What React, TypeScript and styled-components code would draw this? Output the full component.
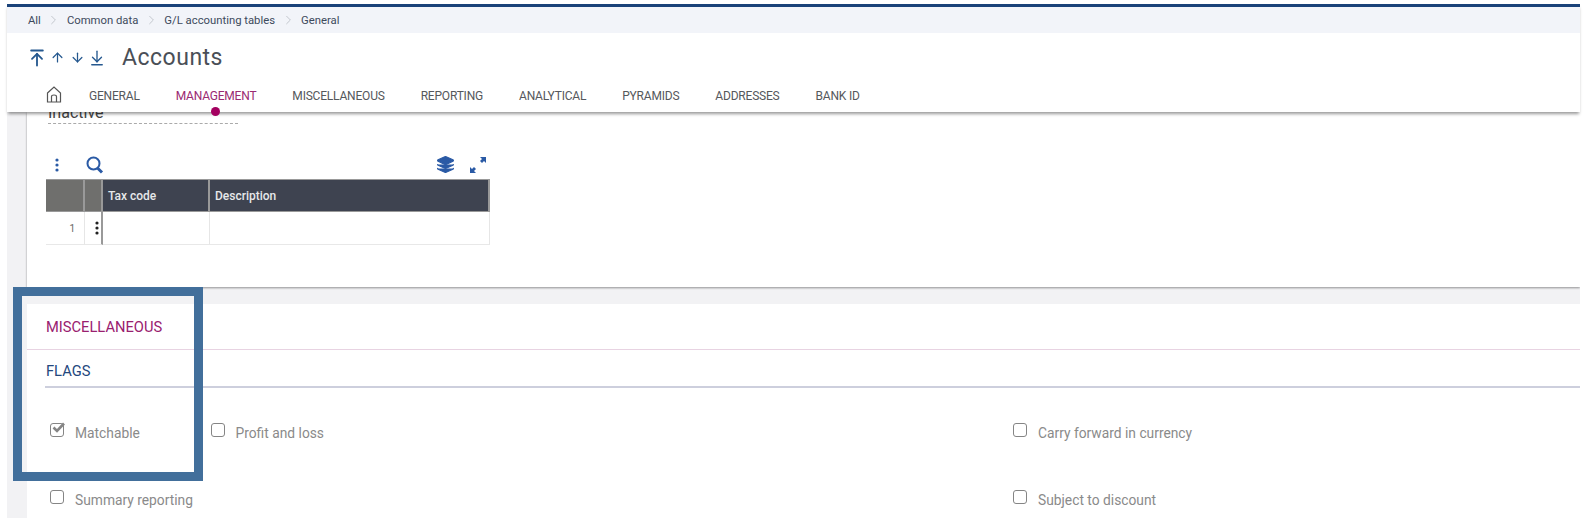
import React from "react";
import styled, { createGlobalStyle } from "styled-components";
import { ArrowUpToLine, ArrowUp, ArrowDown, ArrowDownToLine, ChevronRight, Layers } from "lucide-react";

const Global = createGlobalStyle`
  html, body { margin: 0; padding: 0; background: #fff; }
  body { font-family: Roboto, "Liberation Sans", sans-serif; }
  #root { width: 1591px; height: 524px; overflow: hidden; }
`;

const Page = styled.div`
  position: relative;
  width: 1591px;
  height: 524px;
  padding: 4px 11px 6px 7px;
  box-sizing: border-box;
  display: flex;
  flex-direction: column;
  overflow: hidden;
`;

const Header = styled.header`
  position: relative;
  z-index: 2;
  flex: none;
  background: #fff;
  border-top: 3px solid #1a4279;
  box-shadow: 0 3px 3px -1px rgba(0, 0, 0, 0.4);
`;

const Breadcrumb = styled.nav`
  height: 26px;
  background: #f2f4f9;
  padding-left: 21px;
  display: flex;
  align-items: center;
  gap: 5.5px;
  font-size: 11.3px;
  color: #3d4a5c;
`;

const Crumb = styled.span`
  white-space: nowrap;
`;

const Sep = styled(ChevronRight)`
  width: 15px;
  height: 16px;
  color: #bfc3ca;
  stroke-width: 1.5;
`;

const TitleRow = styled.div`
  height: 47px;
  box-sizing: border-box;
  padding: 2px 0 0 20px;
  display: flex;
  align-items: center;
`;

const ArrowGroup = styled.div`
  display: flex;
  align-items: center;
  color: #25588f;
  margin-right: 15px;
`;

const ArrowIcon = styled.span<{ $size: number; $stroke: number }>`
  display: flex;
  width: 20px;
  justify-content: center;
  svg {
    width: ${(p) => p.$size}px;
    height: ${(p) => p.$size}px;
    stroke-width: ${(p) => p.$stroke};
  }
`;

const Title = styled.h1`
  margin: 0;
  font-size: 23px;
  font-weight: 400;
  letter-spacing: 0.5px;
  color: #4a4f57;
`;

const Tabs = styled.div`
  height: 32px;
  display: flex;
  align-items: center;
  padding-left: 39px;
  padding-bottom: 1px;
  box-sizing: border-box;
`;

const HomeIcon = styled.svg`
  width: 16px;
  height: 17px;
  margin-right: 27px;
  margin-top: -3px;
  color: #555;
`;

const Tab = styled.div<{ $active?: boolean }>`
  position: relative;
  font-size: 12px;
  letter-spacing: -0.2px;
  color: ${(p) => (p.$active ? "#9a2a72" : "#55585c")};
  margin-right: 36px;
  white-space: nowrap;
`;

const Dot = styled.span`
  position: absolute;
  left: 35px;
  top: 18px;
  width: 9px;
  height: 9px;
  border-radius: 50%;
  background: #a3005f;
`;

const Body = styled.main`
  flex: 1;
  min-height: 0;
  display: flex;
  flex-direction: column;
  padding-left: 20px;
  background: #f2f2f4;
  overflow: hidden;
`;

const Card = styled.section`
  background: #fff;
  flex: none;
`;

const TopCard = styled(Card)`
  height: 175px;
  box-sizing: border-box;
  padding: 0 0 0 19px;
  box-shadow: 0 1px 2px rgba(0, 0, 0, 0.4);
  position: relative;
  z-index: 1;
`;

const FieldLabel = styled.div`
  margin-left: 2px;
  width: 190px;
  height: 11px;
  line-height: 1px;
  font-size: 16px;
  color: #444;
  border-bottom: 1px dashed #aaa;
  white-space: nowrap;
`;

const GridTools = styled.div`
  width: 444px;
  height: 23px;
  margin-top: 29px;
  display: flex;
  align-items: center;
  color: #2a5aa5;
`;

const ToolIcon = styled.svg<{ $left?: number; $right?: number }>`
  flex: none;
  margin-left: ${(p) => p.$left ?? 0}px;
  margin-right: ${(p) => p.$right ?? 0}px;
`;

const Spacer = styled.div`
  flex: 1;
`;

const Table = styled.div`
  margin-top: 3px;
  width: 444px;
  display: grid;
  grid-template-columns: 39px 18px 107px 1fr;
`;

const HeadCell = styled.div<{ $dark?: boolean }>`
  height: 33px;
  box-sizing: border-box;
  background: ${(p) => (p.$dark ? "#3e4350" : "#6f6f6d")};
  border: 1px solid #999;
  border-width: 1px 2px 1px 0;
  color: #e6e8ea;
  font-size: 12px;
  font-weight: 500;
  display: flex;
  align-items: center;
  padding-left: 5px;
`;

const RowCell = styled.div<{ $strong?: boolean }>`
  height: 33px;
  box-sizing: border-box;
  border-bottom: 1px solid #e8e8e8;
  border-right: ${(p) => (p.$strong ? "2px solid #999" : "1px solid #e6e6e6")};
  display: flex;
  align-items: center;
  font-size: 10px;
  color: #666;
`;

const RowNumber = styled(RowCell)`
  justify-content: flex-end;
  padding-right: 9px;
`;

const RowMenu = styled(RowCell)`
  justify-content: center;
  padding-left: 8px;
  color: #222;
`;

const Band = styled.div`
  height: 17px;
  flex: none;
`;

const LowerCard = styled(Card)`
  flex: 1;
`;

const SectionTitle = styled.div`
  height: 46px;
  box-sizing: border-box;
  padding: 15px 0 0 19px;
  font-size: 14.7px;
  line-height: 16px;
  color: #99206f;
  border-bottom: 1px solid #e8d3e2;
`;

const BlockTitle = styled.div`
  margin-left: 18px;
  height: 38px;
  box-sizing: border-box;
  padding: 13px 0 0 1px;
  font-size: 14.7px;
  line-height: 16px;
  color: #24477d;
  border-bottom: 2px solid #cdcfdd;
`;

const Flags = styled.div`
  display: grid;
  grid-template-columns: 160.5px 802.5px 1fr;
  grid-auto-rows: 67px;
  padding: 36px 0 0 23px;
`;

const Flag = styled.label`
  display: flex;
  align-items: flex-start;
  gap: 11px;
  font-size: 13.8px;
  line-height: 18px;
  color: #8a8a8a;
`;

const Box = styled.span`
  flex: none;
  width: 14px;
  height: 14px;
  box-sizing: border-box;
  border: 1.5px solid #858585;
  border-radius: 3px;
  position: relative;
  top: -1px;
`;

const CheckMark = styled.svg`
  position: absolute;
  left: 0;
  top: -3px;
  overflow: visible;
`;

const Highlight = styled.div`
  position: absolute;
  left: 13px;
  top: 287px;
  width: 190px;
  height: 194px;
  box-sizing: border-box;
  border: 9px solid #426f9b;
  z-index: 3;
  pointer-events: none;
`;

const Kebab = ({ color }: { color: string }) => (
  <svg width="4" height="14" viewBox="0 0 4 14" style={{ display: "block" }}>
    <circle cx="2" cy="2" r="1.6" fill={color} />
    <circle cx="2" cy="7" r="1.6" fill={color} />
    <circle cx="2" cy="12" r="1.6" fill={color} />
  </svg>
);

const FlagItem = ({ label, checked }: { label: string; checked?: boolean }) => (
  <Flag>
    <Box>
      {checked && (
        <CheckMark width="14" height="14" viewBox="0 0 14 14">
          <path d="M2.5 6.5 L6 10 L13 2.5" fill="none" stroke="#858585" strokeWidth="2.6" />
        </CheckMark>
      )}
    </Box>
    {label}
  </Flag>
);

export default function App() {
  return (
    <>
      <Global />
      <Page>
        <Header>
          <Breadcrumb>
            <Crumb>All</Crumb>
            <Sep />
            <Crumb>Common data</Crumb>
            <Sep />
            <Crumb>G/L accounting tables</Crumb>
            <Sep />
            <Crumb>General</Crumb>
          </Breadcrumb>
          <TitleRow>
            <ArrowGroup>
              <ArrowIcon $size={20} $stroke={2.2}><ArrowUpToLine /></ArrowIcon>
              <ArrowIcon $size={15} $stroke={2}><ArrowUp /></ArrowIcon>
              <ArrowIcon $size={15} $stroke={2}><ArrowDown /></ArrowIcon>
              <ArrowIcon $size={18} $stroke={1.8}><ArrowDownToLine /></ArrowIcon>
            </ArrowGroup>
            <Title>Accounts</Title>
          </TitleRow>
          <Tabs>
            <HomeIcon viewBox="0 0 16 17" fill="none" stroke="currentColor" strokeWidth="1.2">
              <path d="M1.5 7 L8 1 L14.5 7 V16 H1.5 Z" />
              <path d="M5.5 16 V10.5 Q5.5 9 8 9 Q10.5 9 10.5 10.5 V16" />
            </HomeIcon>
            <Tab>GENERAL</Tab>
            <Tab $active>
              MANAGEMENT
              <Dot />
            </Tab>
            <Tab>MISCELLANEOUS</Tab>
            <Tab>REPORTING</Tab>
            <Tab>ANALYTICAL</Tab>
            <Tab>PYRAMIDS</Tab>
            <Tab>ADDRESSES</Tab>
            <Tab>BANK ID</Tab>
          </Tabs>
        </Header>
        <Body>
          <TopCard>
            <FieldLabel>Inactive</FieldLabel>
            <GridTools>
              <ToolIcon as="span" $left={9} $right={27} style={{ display: "flex" }}>
                <Kebab color="#2a5aa5" />
              </ToolIcon>
              <ToolIcon width="18" height="18" viewBox="0 0 18 18" fill="none">
                <circle cx="7.5" cy="7.5" r="6" stroke="currentColor" strokeWidth="2" />
                <path d="M11.5 12 L16 16.5" stroke="currentColor" strokeWidth="3" />
              </ToolIcon>
              <Spacer />
              <ToolIcon as="span" $right={14} style={{ display: "flex" }}>
                <Layers size={19} fill="currentColor" strokeWidth={1.5} />
              </ToolIcon>
              <ToolIcon width="18" height="18" viewBox="0 0 18 18" $right={3}>
                <path d="M11 1 H17 V7 L15 5 L13 7 L11 5 L13 3 Z" fill="currentColor" />
                <path d="M1 11 V17 H7 L5 15 L7 13 L5 11 L3 13 Z" fill="currentColor" />
              </ToolIcon>
            </GridTools>
            <Table>
              <HeadCell />
              <HeadCell />
              <HeadCell $dark>Tax code</HeadCell>
              <HeadCell $dark>Description</HeadCell>
              <RowNumber>1</RowNumber>
              <RowMenu $strong><Kebab color="#222" /></RowMenu>
              <RowCell />
              <RowCell />
            </Table>
          </TopCard>
          <Band />
          <LowerCard>
            <SectionTitle>MISCELLANEOUS</SectionTitle>
            <BlockTitle>FLAGS</BlockTitle>
            <Flags>
              <FlagItem label="Matchable" checked />
              <FlagItem label="Profit and loss" />
              <FlagItem label="Carry forward in currency" />
              <FlagItem label="Summary reporting" />
              <span />
              <FlagItem label="Subject to discount" />
            </Flags>
          </LowerCard>
        </Body>
        <Highlight />
      </Page>
    </>
  );
}
